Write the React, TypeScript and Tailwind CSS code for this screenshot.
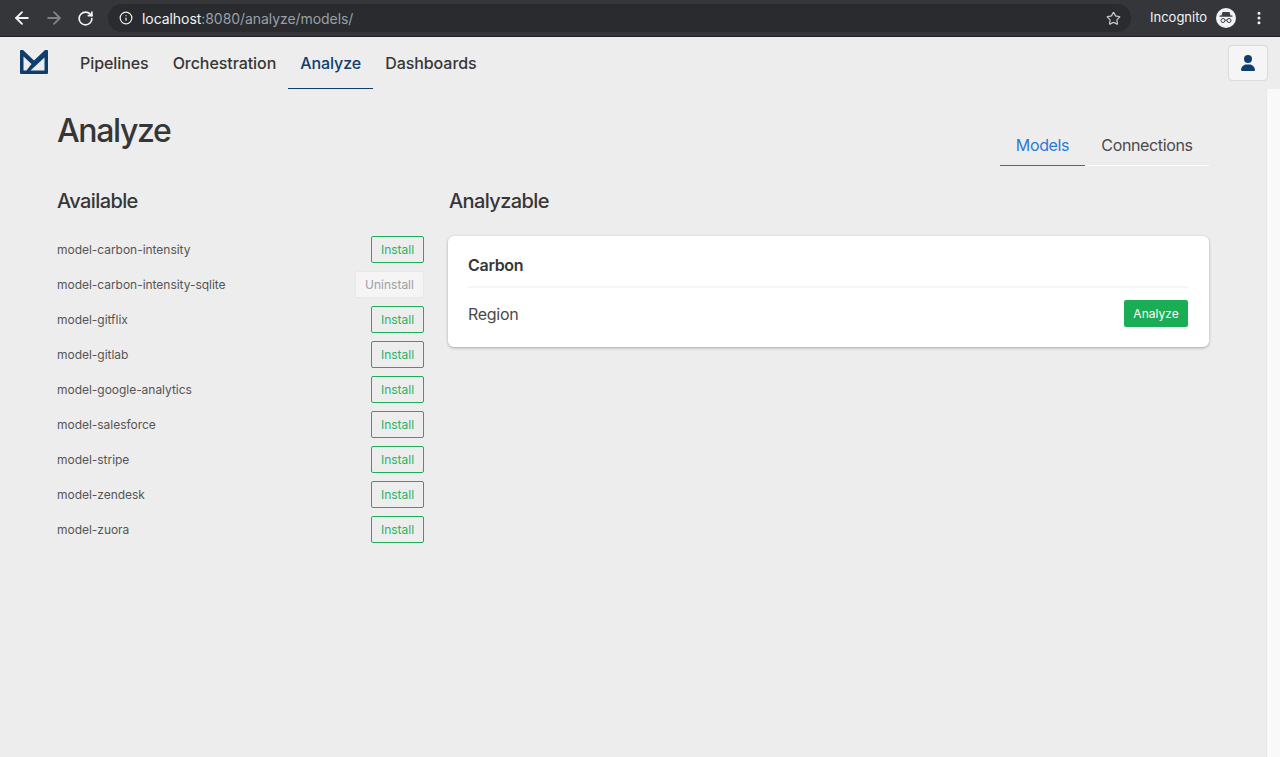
import React from 'react';
import { ArrowLeft, ArrowRight, RotateCw, Info, Star, EllipsisVertical } from 'lucide-react';

const models = [
  { name: 'model-carbon-intensity', installed: false },
  { name: 'model-carbon-intensity-sqlite', installed: true },
  { name: 'model-gitflix', installed: false },
  { name: 'model-gitlab', installed: false },
  { name: 'model-google-analytics', installed: false },
  { name: 'model-salesforce', installed: false },
  { name: 'model-stripe', installed: false },
  { name: 'model-zendesk', installed: false },
  { name: 'model-zuora', installed: false },
];

function Logo() {
  return (
    <svg width="28" height="24" viewBox="0 0 28 24" className="block">
      <path d="M1 0 L3 0 L14 10.500 L25 0 L27 0 Q28 0 28 1 L28 23 Q28 24 27 24 L1 24 Q0 24 0 23 L0 1 Q0 0 1 0 Z" fill="#0f3d6e" />
      <path d="M3.500 6.500 L3.500 20.500 L6.500 20.500 L11.500 14 Z" fill="#ededed" />
      <path d="M24.500 7.500 L24.500 20.500 L10.500 20.500 Z" fill="#ededed" />
    </svg>
  );
}

function Incognito() {
  return (
    <svg width="20" height="20" viewBox="0 0 20 20" className="block">
      <circle cx="10" cy="10" r="10" fill="#f1f3f4" />
      <path d="M6.500 4 H13.500 L14.500 7.500 H16.500 V8.700 H3.500 V7.500 H5.500 Z" fill="#3c4043" />
      <circle cx="7" cy="12.500" r="2" fill="none" stroke="#3c4043" strokeWidth="1" />
      <circle cx="13" cy="12.500" r="2" fill="none" stroke="#3c4043" strokeWidth="1" />
      <path d="M9 12.200 H11" stroke="#3c4043" strokeWidth="1" />
    </svg>
  );
}

export default function App() {
  return (
    <div className="h-[757px] overflow-hidden bg-[#ededed] text-[#363636] font-['Inter',sans-serif]">
      {/* Browser chrome */}
      <div className="h-[37px] bg-[#35363a] border-b border-[#1f2023] flex items-center pl-[12px] pr-[12px]">
        <ArrowLeft className="w-[20px] h-[20px] text-[#f1f3f4]" strokeWidth={2.2} />
        <ArrowRight className="w-[20px] h-[20px] ml-[12px] text-[#808285]" strokeWidth={2.2} />
        <RotateCw className="w-[17px] h-[17px] ml-[13px] text-[#f1f3f4]" strokeWidth={2.4} />
        <div className="ml-[14px] w-[1023px] h-[28px] rounded-full bg-[#292b2e] flex items-center pl-[11px] pr-[10px]">
          <Info className="w-[14px] h-[14px] text-[#f1f3f4]" />
          <span className="ml-[9px] text-[14px] tracking-[-0.06px] text-[#f1f3f4]">
            localhost<span className="text-[#9aa0a6]">:8080/analyze/models/</span>
          </span>
          <Star className="ml-auto w-[15px] h-[15px] text-[#c4c7ca]" />
        </div>
        <span className="ml-[19px] text-[13px] text-[#f1f3f4]">Incognito</span>
        <div className="ml-[9px]"><Incognito /></div>
        <EllipsisVertical className="ml-[15px] w-[16px] h-[16px] text-[#f1f3f4]" strokeWidth={2.5} />
      </div>

      {/* Navbar */}
      <div className="h-[52px] flex items-stretch pl-[20px] pr-[12px]">
        <div className="flex items-center pb-[2px]"><Logo /></div>
        <nav className="ml-[20px] flex items-stretch text-[16px] font-medium tracking-[-0.07px]">
          <a className="px-[12px] flex items-center">Pipelines</a>
          <a className="px-[12px] flex items-center">Orchestration</a>
          <a className="px-[12px] flex items-center text-[#0f3d6e] border-b border-[#0f3d6e]">Analyze</a>
          <a className="px-[12px] flex items-center">Dashboards</a>
        </nav>
        <div className="ml-auto pt-[8px]">
          <button className="w-[40px] h-[36px] rounded-[4px] border border-[#dbdbdb] bg-[#f5f5f5] flex items-center justify-center">
            <svg width="14" height="16" viewBox="0 0 448 512" fill="#0f3d6e">
              <path d="M224 256A128 128 0 1 0 224 0a128 128 0 1 0 0 256zm-45.700 48C79.800 304 0 383.800 0 482.300 0 498.700 13.300 512 29.700 512h388.600c16.400 0 29.700-13.300 29.700-29.700C448 383.800 368.200 304 269.700 304H178.300z" />
            </svg>
          </button>
        </div>
      </div>

      {/* Page */}
      <div className="flex h-[668px]">
        <main className="w-[1266px] pl-[57px] pr-[57px]">
          <div className="flex justify-between">
            <h1 className="text-[32px] leading-[40px] font-[550] tracking-[-1.35px] mt-[22px]">Analyze</h1>
            <div className="flex mt-[39px] h-[38px] text-[16px] tracking-[-0.36px] border-b border-white">
              <a className="w-[85px] pb-[3px] flex items-center justify-center text-[#2b7bd6] border-b border-[#2b6fc0] h-[38px]">Models</a>
              <a className="w-[124px] pb-[3px] flex items-center justify-center text-[#4a4a4a]">Connections</a>
            </div>
          </div>

          <div className="flex mt-[20px]">
            <div className="w-[367px]">
              <h2 className="text-[20px] leading-[30px] font-[550] tracking-[-0.6px]">Available</h2>
              <ul className="mt-[20px] flex flex-col gap-[8px]">
                {models.map((m) => (
                  <li key={m.name} className="h-[27px] flex items-center justify-between">
                    <span className="text-[12px] tracking-[-0.03px] text-[#555555]">{m.name}</span>
                    {m.installed ? (
                      <button className="h-[27px] w-[69px] rounded-[2px] border border-[#e8e8e8] bg-[#f5f5f5] text-[12px] text-[#a0a0a0]">Uninstall</button>
                    ) : (
                      <button className="h-[27px] w-[53px] rounded-[2px] border border-[#1fad5b] text-[12px] text-[#2bb368]">Install</button>
                    )}
                  </li>
                ))}
              </ul>
            </div>
            <div className="ml-[24px] flex-1">
              <h2 className="pl-px text-[20px] leading-[30px] font-[550] tracking-[-0.6px]">Analyzable</h2>
              <div className="mt-[20px] bg-white rounded-[6px] shadow-[0_1px_3px_rgba(0,0,0,0.3)] pl-[20px] pr-[21px] pt-[20px] h-[111px]">
                <h3 className="text-[16px] leading-[19px] font-semibold tracking-[-0.3px] pb-[11px] border-b-2 border-[#f5f5f5]">Carbon</h3>
                <div className="flex items-center justify-between mt-[12px]">
                  <span className="pt-px text-[16px] tracking-[-0.3px] text-[#4a4a4a]">Region</span>
                  <button className="w-[64px] h-[27px] rounded-[2px] bg-[#1aad55] text-[12px] text-white">Analyze</button>
                </div>
              </div>
            </div>
          </div>
        </main>
        <div className="w-[14px] bg-[#f9f9f9] border-l border-[#e8e8e8]" />
      </div>
    </div>
  );
}
